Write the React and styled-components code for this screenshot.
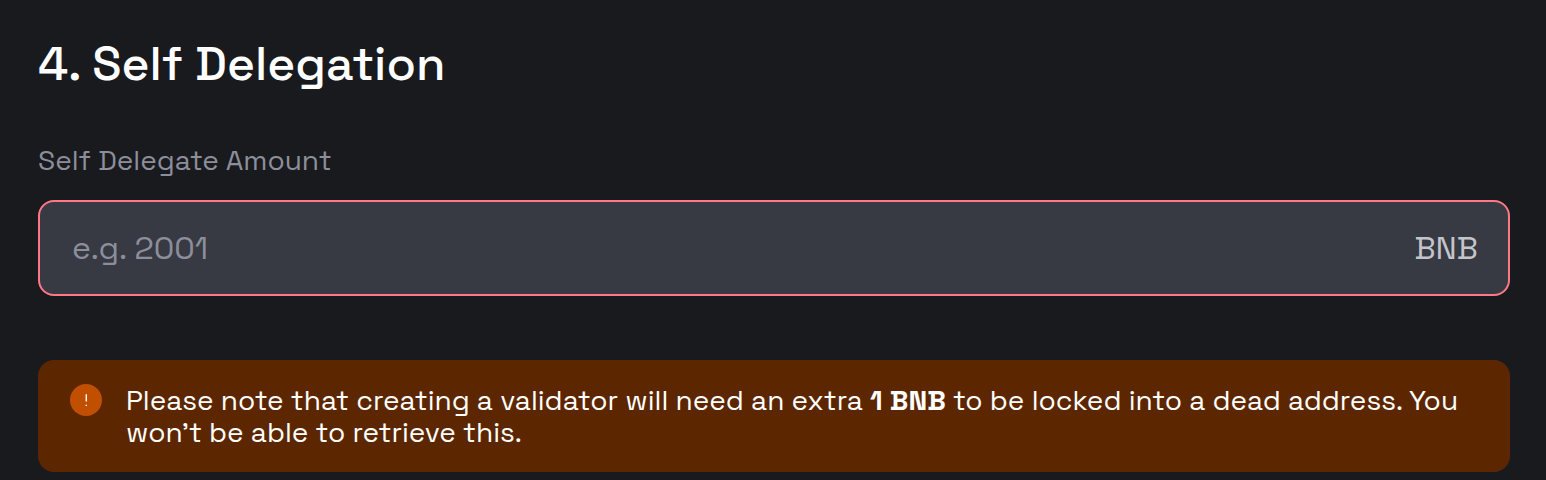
import React from "react";
import styled, { createGlobalStyle } from "styled-components";

const Global = createGlobalStyle`
  * { box-sizing: border-box; }
  body {
    margin: 0;
    background: #191a1e;
    font-family: "Space Grotesk", Inter, "Liberation Sans", sans-serif;
    -webkit-font-smoothing: antialiased;
  }
`;

const Section = styled.main`
  height: 480px;
  padding: 36px 36px 0 38px;
  overflow: hidden;
`;

const Title = styled.h2`
  margin: 0;
  font-size: 48px;
  line-height: 56px;
  font-weight: 500;
  color: #fff;
`;

const Label = styled.label`
  display: block;
  margin-top: 51px;
  font-size: 28px;
  line-height: 34px;
  color: #8c8f9b;
`;

const Field = styled.div`
  display: flex;
  align-items: center;
  justify-content: space-between;
  height: 96px;
  margin-top: 23px;
  padding: 0 30px 0 32px;
  border: 2px solid #ff7886;
  border-radius: 16px;
  background: #373943;
  font-size: 32px;
`;

const Placeholder = styled.span`
  color: #8c8f9b;
`;

const Unit = styled.span`
  color: #c4c5cb;
`;

const Notice = styled.aside`
  display: flex;
  gap: 24px;
  height: 112px;
  margin-top: 64px;
  padding: 24px 32px;
  border-radius: 16px;
  background: #5c2700;
`;

const AlertIcon = styled.svg`
  flex: none;
  width: 32px;
  height: 32px;
`;

const Message = styled.p`
  margin: 0;
  color: #fff;
  font-size: 28px;
  line-height: 32px;
`;

const Strong = styled.strong`
  font-weight: 700;
`;

export default function App() {
  return (
    <Section>
      <Global />
      <Title>4. Self Delegation</Title>
      <Label>Self Delegate Amount</Label>
      <Field>
        <Placeholder>e.g. 2001</Placeholder>
        <Unit>BNB</Unit>
      </Field>
      <Notice>
        <AlertIcon viewBox="0 0 32 32">
          <circle cx="16" cy="16" r="16" fill="#c05000" />
          <path d="M16.3 10.3v7.3M16.3 20.8v1.2" stroke="#fff" strokeWidth="1.4" />
        </AlertIcon>
        <Message>
          Please note that creating a validator will need an extra <Strong>1 BNB</Strong> to be
          locked into a dead address. You won’t be able to retrieve this.
        </Message>
      </Notice>
    </Section>
  );
}
